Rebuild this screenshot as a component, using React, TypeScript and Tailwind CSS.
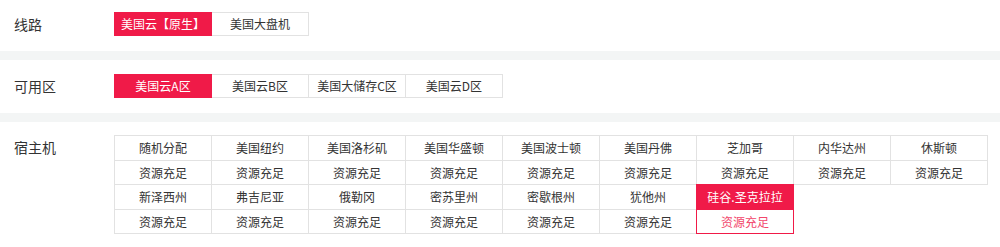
const lines = [
  { name: "美国云【原生】", active: true },
  { name: "美国大盘机", active: false },
];

const zones = [
  { name: "美国云A区", active: true },
  { name: "美国云B区", active: false },
  { name: "美国大储存C区", active: false },
  { name: "美国云D区", active: false },
];

const hosts = [
  "随机分配",
  "美国纽约",
  "美国洛杉矶",
  "美国华盛顿",
  "美国波士顿",
  "美国丹佛",
  "芝加哥",
  "内华达州",
  "休斯顿",
  "新泽西州",
  "弗吉尼亚",
  "俄勒冈",
  "密苏里州",
  "密歇根州",
  "犹他州",
  "硅谷.圣克拉拉",
];

const Options = ({ items }: { items: { name: string; active: boolean }[] }) => (
  <div className="flex pl-px">
    {items.map((it) => (
      <div
        key={it.name}
        className={
          it.active
            ? "relative z-10 -ml-px flex h-[24px] w-[98px] items-center justify-center border border-[#f01a48] bg-[#f01a48] text-[12px] text-white"
            : "-ml-px flex h-[24px] w-[98px] items-center justify-center border border-[#e2e2e2] bg-white text-[12px] text-[#333]"
        }
      >
        {it.name}
      </div>
    ))}
  </div>
);

const Row = ({ label, children, className }: { label: string; children: React.ReactNode; className: string }) => (
  <div className={"flex bg-white " + className}>
    <div className="w-[114px] shrink-0 pl-[14px] text-[14px] leading-[24px] text-[#333]">{label}</div>
    {children}
  </div>
);

export default function App() {
  return (
    <div
      className="h-[247px] w-[1000px] overflow-hidden bg-white"
      style={{ fontFamily: '"Noto Sans CJK SC", "Noto Sans", sans-serif' }}
    >
      <Row label="线路" className="pt-[12px] pb-[15px]">
        <Options items={lines} />
      </Row>
      <div className="h-[9px] bg-[#f3f5f5]" />
      <Row label="可用区" className="pt-[14px] pb-[15px]">
        <Options items={zones} />
      </Row>
      <div className="h-[9px] bg-[#f3f5f5]" />
      <Row label="宿主机" className="pt-[13px]">
        <div className="flex w-[874px] flex-wrap pl-px pt-px">
          {hosts.map((h, i) => {
            const active = i === hosts.length - 1;
            return (
              <div
                key={h}
                className={
                  active
                    ? "relative z-10 -mt-px -ml-px flex h-[50px] w-[98px] flex-col border border-[#f01a48] text-[12px]"
                    : "-mt-px -ml-px flex h-[50px] w-[98px] flex-col border border-[#e2e2e2] text-[12px]"
                }
              >
                <div
                  className={
                    active
                      ? "flex h-[24px] items-center justify-center bg-[#f01a48] text-white"
                      : "flex h-[24px] items-center justify-center text-[#333]"
                  }
                >
                  {h}
                </div>
                <div
                  className={
                    active
                      ? "flex flex-1 items-center justify-center border-t border-[#f01a48] text-[#f2466b]"
                      : "flex flex-1 items-center justify-center border-t border-[#e2e2e2] text-[#333]"
                  }
                >
                  资源充足
                </div>
              </div>
            );
          })}
        </div>
      </Row>
    </div>
  );
}
